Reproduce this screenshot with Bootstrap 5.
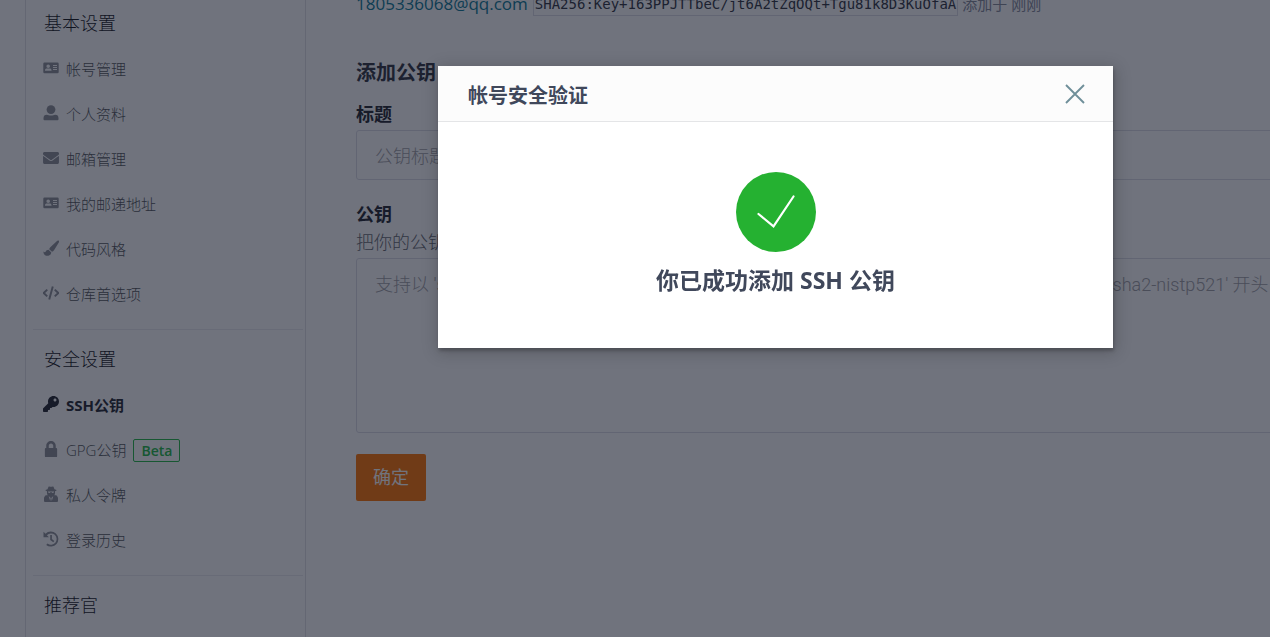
<!DOCTYPE html>
<html lang="zh-CN">
<head>
<meta charset="utf-8">
<meta name="viewport" content="width=device-width, initial-scale=1">
<title>SSH公钥</title>
<link href="https://cdn.jsdelivr.net/npm/bootstrap@5.3.0/dist/css/bootstrap.min.css" rel="stylesheet">
<style>
  html, body { height: 100%; overflow: hidden; }
  body { font-family: "Open Sans", "Noto Sans CJK SC", sans-serif; color: #30343f; background: #fff; font-size: 18px; }
  .page-shell { width: calc(100% + 281px); padding-left: 25px; min-height: 100vh; }
  .side-menu { width: 281px; border-left: 1px solid #e0e1e6; border-right: 1px solid #e0e1e6; }
  .side-title { height: 46px; line-height: 46px; font-size: 18px; font-weight: 300; color: #101218; margin: 0; padding-left: 18px; }
  .side-link { height: 45px; padding: 1px 0 0 17px; font-size: 15px; font-weight: 300; color: #505357; text-decoration: none; }
  .side-link svg { width: 16px; height: 16px; margin: 0 7px 2px 0; fill: #8c8f97; overflow: visible; }
  .side-link.current { font-weight: 700; color: #22252e; }
  .side-link.current svg { fill: #22252e; }
  .beta-tag { border: 1px solid #21ba45; color: #21ba45; border-radius: 2px; font-size: 14px; font-weight: 600; line-height: 21px; padding: 0 7px; margin-left: 7px; }
  .side-rule { margin: 13px 2px 6px 7px; border-top: 1px solid #eaebef; opacity: 1; }
  .key-main { padding: 0 50px; }
  .key-row { height: 16px; font-size: 17px; line-height: 24px; }
  .key-row a { color: #0a7896; text-decoration: none; }
  .fingerprint { font: 14px/22px "DejaVu Sans Mono", monospace; color: #30343f; border: 1px solid #dcdde6; padding: 0 1px; margin: 0 4px 0 5px; }
  .key-time { font-size: 15px; color: #84899a; }
  .form-title { font-size: 20px; line-height: 28px; font-weight: 700; margin: 43px 0 15px; }
  .form-label { font-weight: 700; line-height: 24px; margin: 0 0 4px; color: #22252e; }
  .form-label.key-label { margin: 22px 0 4px; }
  .key-hint { line-height: 24px; font-weight: 300; color: #64676e; margin-bottom: 4px; }
  .key-input { height: 50px; }
  .key-text { height: 175px; resize: none; }
  .form-control { font-family: Roboto, "Noto Sans CJK SC", sans-serif; font-size: 18px; line-height: 26px; font-weight: 300; padding: 13px 18px 11px; border: 1px solid #dcdde6; border-radius: 3px; }
  .form-control::placeholder { color: #a0a0a5; }
  .ok-btn { width: 70px; height: 47px; margin-top: 21px; border-radius: 2px; background: #fe7300; border: 0; color: #fff; font-size: 18px; padding: 0; }
  .verify-modal { width: calc(100% + 281px); background: rgba(17, 21, 39, .6); }
  .verify-modal .modal-dialog { max-width: 675px; margin: 66px auto; }
  .verify-modal .modal-content { border: 0; border-radius: 0; color: #40485b; box-shadow: 1px 3px 3px rgba(0,0,0,.2), 1px 3px 15px 2px rgba(0,0,0,.2); }
  .verify-modal .modal-header { height: 56px; padding: 0 28px 0 30px; border-radius: 0; background: #fcfcfc; border-bottom: 1px solid #e4e5e7; }
  .verify-modal .modal-title { font-size: 20px; font-weight: 700; line-height: 28px; padding-top: 4px; }
  .close-x { border: 0; background: none; padding: 0; line-height: 0; }
  .verify-modal .modal-body { padding: 50px 0 52px; }
  .done-text { font-size: 23px; line-height: 32px; font-weight: 700; margin: 12px 0 0; }
</style>
</head>
<body>
<svg class="d-none">
  <symbol id="i-card" viewBox="0 0 16 16"><path fill-rule="evenodd" d="M1.500 2.500h13a1.200 1.200 0 0 1 1.200 1.200v8.300a1.200 1.200 0 0 1-1.200 1.200h-13a1.200 1.200 0 0 1-1.200-1.200V3.700a1.200 1.200 0 0 1 1.200-1.200zM5.200 4.500a1.800 1.800 0 1 0 0 3.600 1.800 1.800 0 0 0 0-3.600zM2 10.800h6.500v-.6c0-1-.8-1.700-1.700-1.700H3.700C2.800 8.500 2 9.200 2 10.200zM10 5v1h4V5zm0 2v1h4V7zm0 2v1h4V9z"/></symbol>
  <symbol id="i-user" viewBox="0 0 16 16"><circle cx="8" cy="4.600" r="4.400"/><path d="M.5 15V13.200A3.400 3.400 0 0 1 3.900 9.800C5 9.800 6.200 10.600 8 10.600s3-.8 4.100-.8a3.400 3.400 0 0 1 3.400 3.400V14.200a1 1 0 0 1-1 1h-13a1 1 0 0 1-1-1z"/></symbol>
  <symbol id="i-mail" viewBox="0 0 512 512"><path d="M502 190.800c3.300-2.600 8-.2 8 4V400c0 26.500-21.500 48-48 48H50c-26.500 0-48-21.500-48-48V195c0-4.200 5-6.600 8-4 22.400 17.400 52.100 39.500 154.100 113.600 21.100 15.400 56.700 47.800 92.200 47.600 35.700.3 72-32.800 92.300-47.600C450.600 230.500 479.600 208.200 502 190.800zM256 320c23.200.4 56.600-29.200 73.400-41.400 132.700-96.300 142.800-104.700 173.400-128.700 5.800-4.500 9.200-11.500 9.200-18.900v-19c0-26.500-21.500-48-48-48H48C21.500 64 0 85.500 0 112v19c0 7.400 3.400 14.300 9.200 18.900 30.600 23.900 40.700 32.400 173.400 128.700C199.400 290.800 232.800 320.400 256 320z"/></symbol>
  <symbol id="i-brush" viewBox="0 0 16 16"><path d="M15.600.6c.6.500.5 1.200.2 1.900L11 10.300c-.6.8-1.200 1.200-2 1.400L6.200 9.200c.1-.8.500-1.500 1.100-2L14 .9c.5-.5 1-.7 1.600-.3zM5.500 9.800l2.800 2.600C8.200 14.400 6.600 15.800 4.200 15.800 1.500 15.800.4 14 .4 11.500c1 .7 1.800 1 2.200.2.600-1.200 1.600-1.900 2.900-1.900z"/></symbol>
  <symbol id="i-code" viewBox="-1 0 18 16"><path d="M3.800 4.200-.2 8l4 3.800M12.200 4.200l4 3.800-4 3.800M10 .8 6 15.200" fill="none" stroke="#8c8f97" stroke-width="2.200"/></symbol>
  <symbol id="i-key" viewBox="0 0 512 512"><path d="M512 176c0 97.200-78.800 176-176 176-11.200 0-22.200-1.100-32.800-3.100l-24 27A24 24 0 0 1 261.200 384H224v40c0 13.300-10.700 24-24 24h-40v40c0 13.300-10.700 24-24 24H24c-13.300 0-24-10.700-24-24v-78.100c0-6.400 2.500-12.500 7-17l161.800-161.800C162.900 213.800 160 195.300 160 176 160 78.800 238.800 0 336 0 433.500 0 512 78.500 512 176zM336 128c0 26.500 21.500 48 48 48s48-21.500 48-48-21.500-48-48-48-48 21.500-48 48z"/></symbol>
  <symbol id="i-lock" viewBox="-32 0 512 512"><path d="M376 224v-72C376 68.200 307.800 0 224 0S72 68.200 72 152v72H56c-16 0-28 12-28 28v232c0 16 12 28 28 28h336c16 0 28-12 28-28V252c0-16-12-28-28-28zm-80 0H152v-72c0-39.700 32.300-72 72-72s72 32.300 72 72z"/></symbol>
  <symbol id="i-secret" viewBox="0 0 16 16"><path fill-rule="evenodd" d="M5.500.8C6.300 0 7.200.8 8 .8s1.700-.8 2.500 0l1 2.500 2 .7c.4.500-.8 1-1.500 1.200V7c0 .8-.3 1.600-.7 2.200h2c1 .8 1.700 1.900 1.700 3.300V15a1 1 0 0 1-1 1H2a1 1 0 0 1-1-1v-2.500c0-1.400.7-2.500 1.700-3.300h2C4.300 8.600 4 7.800 4 7V5.200C3.300 5 2.100 4.500 2.500 4l2-.7zM5 6c.3 1.300 2.200 1.300 2.600 0h.8c.4 1.300 2.300 1.300 2.600 0V5.600H5zM5.700 10l1.500 5L7.700 12zm4.600 0-2 2 .5 3z"/></symbol>
  <symbol id="i-history" viewBox="0 0 16 16"><path d="M.5.8v5.400h5.400L3.900 4.300A5.600 5.600 0 1 1 4.500 12.400L3.200 14A7.500 7.500 0 1 0 2.500 2.800z"/><path d="M7.200 4h1.700v4.100l2.400 1.800-1 1.400-3.100-2.400z"/></symbol>
</svg>

<div class="page-shell d-flex">
  <nav class="side-menu flex-shrink-0" aria-label="设置">
    <h2 class="side-title">基本设置</h2>
    <a href="#" class="side-link d-flex align-items-center"><svg><use href="#i-card"/></svg>帐号管理</a>
    <a href="#" class="side-link d-flex align-items-center"><svg><use href="#i-user"/></svg>个人资料</a>
    <a href="#" class="side-link d-flex align-items-center"><svg><use href="#i-mail"/></svg>邮箱管理</a>
    <a href="#" class="side-link d-flex align-items-center"><svg><use href="#i-card"/></svg>我的邮递地址</a>
    <a href="#" class="side-link d-flex align-items-center"><svg><use href="#i-brush"/></svg>代码风格</a>
    <a href="#" class="side-link d-flex align-items-center"><svg><use href="#i-code"/></svg>仓库首选项</a>
    <hr class="side-rule">
    <h2 class="side-title">安全设置</h2>
    <a href="#" class="side-link current d-flex align-items-center" aria-current="page"><svg><use href="#i-key"/></svg>SSH公钥</a>
    <a href="#" class="side-link d-flex align-items-center"><svg><use href="#i-lock"/></svg>GPG公钥<span class="beta-tag">Beta</span></a>
    <a href="#" class="side-link d-flex align-items-center"><svg><use href="#i-secret"/></svg>私人令牌</a>
    <a href="#" class="side-link d-flex align-items-center"><svg><use href="#i-history"/></svg>登录历史</a>
    <hr class="side-rule">
    <h2 class="side-title">推荐官</h2>
  </nav>

  <main class="key-main flex-grow-1">
    <div class="key-row d-flex align-items-end text-nowrap">
      <a href="#">1805336068@qq.com</a>
      <code class="fingerprint">SHA256:Key+163PPJTTbeC/jt6A2tZqOQt+Tgu81k8D3KuOfaA</code>
      <span class="key-time">添加于 刚刚</span>
    </div>
    <form>
      <h3 class="form-title">添加公钥</h3>
      <label class="form-label d-block" for="key-title">标题</label>
      <input class="form-control key-input" id="key-title" type="text" placeholder="公钥标题">
      <label class="form-label key-label d-block" for="key-body">公钥</label>
      <p class="key-hint">把你的公钥粘贴到这里</p>
      <textarea class="form-control key-text" id="key-body" placeholder="支持以 'ssh-rsa', 'ssh-dss', 'ssh-ed25519','ecdsa-sha2-nistp256', 'ecdsa-sha2-nistp384'或'ecdsa-sha2-nistp521' 开头"></textarea>
      <button class="btn ok-btn" type="button">确定</button>
    </form>
  </main>
</div>

<div class="modal verify-modal d-block" role="dialog" aria-modal="true" aria-labelledby="verify-title">
  <div class="modal-dialog">
    <div class="modal-content">
      <div class="modal-header d-flex align-items-center justify-content-between">
        <h4 class="modal-title" id="verify-title">帐号安全验证</h4>
        <button class="close-x" type="button" aria-label="关闭"><svg width="20" height="20" viewBox="0 0 20 20"><path d="M1 1l18 18M19 1 1 19" stroke="#6f8f99" stroke-width="1.900"/></svg></button>
      </div>
      <div class="modal-body text-center">
        <svg class="d-block mx-auto" width="80" height="80" viewBox="0 0 80 80"><circle cx="40" cy="40" r="40" fill="#25b131"/><path d="M22.500 42 37.500 54.300 57.500 24.500" fill="none" stroke="#fff" stroke-width="2.200" stroke-linecap="round"/></svg>
        <p class="done-text">你已成功添加 SSH 公钥</p>
      </div>
    </div>
  </div>
</div>
<script src="https://cdn.jsdelivr.net/npm/bootstrap@5.3.0/dist/js/bootstrap.bundle.min.js"></script>
</body>
</html>
